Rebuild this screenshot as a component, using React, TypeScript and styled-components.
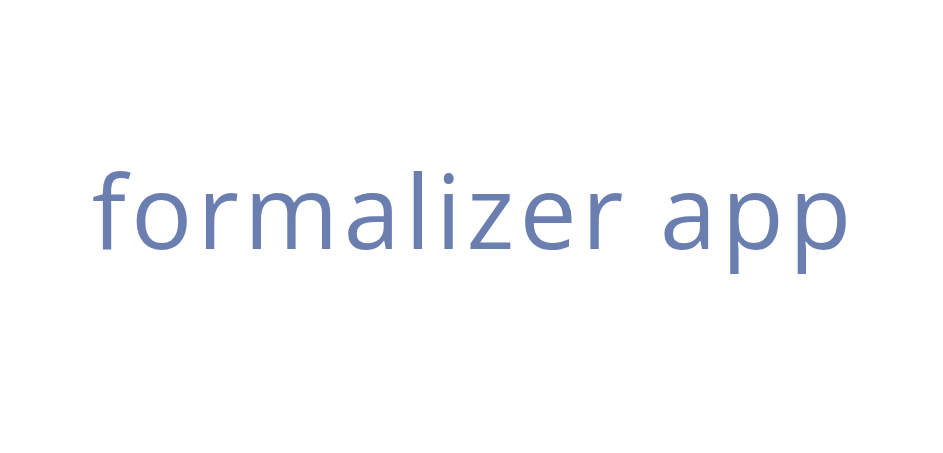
import React from "react";
import styled, { createGlobalStyle } from "styled-components";

const Global = createGlobalStyle`
  html, body { margin: 0; padding: 0; background: #ffffff; }
  #root { width: 943px; height: 453px; }
`;

const Page = styled.div`
  width: 943px;
  height: 453px;
  display: flex;
  align-items: center;
  justify-content: center;
  background: #ffffff;
`;

const Title = styled.h1`
  margin: 0 -5px 33px 0;
  font-family: "Open Sans", "Liberation Sans", sans-serif;
  font-weight: 400;
  font-size: 102px;
  line-height: 1;
  color: #6a7fb0;
  letter-spacing: 5px;
  white-space: nowrap;
`;

export default function App() {
  return (
    <>
      <Global />
      <Page>
        <Title>formalizer app</Title>
      </Page>
    </>
  );
}
